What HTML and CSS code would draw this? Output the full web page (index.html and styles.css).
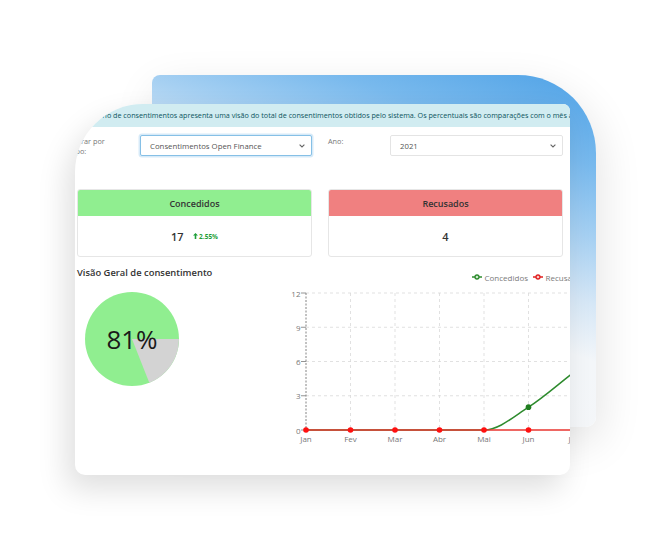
FILE: index.html
```html
<!DOCTYPE html>
<html lang="pt-BR">
<head>
<meta charset="utf-8">
<title>Relatório de consentimentos</title>
<link rel="stylesheet" href="styles.css">
</head>
<body>
<div class="stage">
  <div class="back"></div>
  <div class="front">
    <div class="dash">
      <div class="alert">O relatório de consentimentos apresenta uma visão do total de consentimentos obtidos pelo sistema. Os percentuais são comparações com o mês anterior.</div>
      <div class="filters">
        <div class="flabel">Filtrar por<br>tipo:</div>
        <div class="select select-focus">
          <span>Consentimentos Open Finance</span>
          <svg class="chev" width="6" height="4" viewBox="0 0 6 4"><polyline points="0.6,0.6 3,3 5.4,0.6" fill="none" stroke="#666" stroke-width="1.1"/></svg>
        </div>
        <div class="flabel flabel-ano">Ano:</div>
        <div class="select select-year">
          <span>2021</span>
          <svg class="chev" width="6" height="4" viewBox="0 0 6 4"><polyline points="0.6,0.6 3,3 5.4,0.6" fill="none" stroke="#666" stroke-width="1.1"/></svg>
        </div>
      </div>
      <div class="cards">
        <div class="kpi">
          <div class="kpi-head kpi-green">Concedidos</div>
          <div class="kpi-body">
            <span class="kpi-num">17</span>
            <span class="delta"><svg width="5" height="6" viewBox="0 0 5 6"><path d="M2.5 0 L5 2.6 L3.3 2.6 L3.3 6 L1.7 6 L1.7 2.6 L0 2.6 Z" fill="#1e9e3a"/></svg>2.55%</span>
          </div>
        </div>
        <div class="kpi">
          <div class="kpi-head kpi-red">Recusados</div>
          <div class="kpi-body"><span class="kpi-num">4</span></div>
        </div>
      </div>
      <div class="overview">
        <div class="pie-col">
          <h3 class="ov-title">Visão Geral de consentimento</h3>
          <svg class="pie" width="96" height="96" viewBox="0 0 96 96">
            <circle cx="48" cy="48" r="47" fill="#90ee90"/>
            <path d="M48 48 L95 48 A47 47 0 0 1 65.3 91.7 Z" fill="#d3d3d3"/>
            <text x="48" y="48" text-anchor="middle" dominant-baseline="central" class="pie-label">81%</text>
          </svg>
        </div>
        <svg class="chart" width="320" height="190" viewBox="0 0 320 190">
          <g class="legend">
            <line x1="192" y1="14" x2="202" y2="14" stroke="#2e8b2e" stroke-width="1.5"/>
            <circle cx="197" cy="14" r="2" fill="#cfe9cf" stroke="#2e8b2e" stroke-width="1.3"/>
            <text x="204.5" y="14" dominant-baseline="central">Concedidos</text>
            <line x1="253" y1="14" x2="263" y2="14" stroke="#e02020" stroke-width="1.5"/>
            <circle cx="258" cy="14" r="2" fill="#f6c8c8" stroke="#e02020" stroke-width="1.3"/>
            <text x="265.5" y="14" dominant-baseline="central">Recusados</text>
          </g>
          <g class="grid" stroke="#d9d9d9" stroke-width="0.8" stroke-dasharray="3 3">
            <line x1="26" y1="30" x2="320" y2="30"/>
            <line x1="26" y1="64.25" x2="320" y2="64.25"/>
            <line x1="26" y1="98.5" x2="320" y2="98.5"/>
            <line x1="26" y1="132.75" x2="320" y2="132.75"/>
            <line x1="70.5" y1="30" x2="70.5" y2="167"/>
            <line x1="115" y1="30" x2="115" y2="167"/>
            <line x1="159.5" y1="30" x2="159.5" y2="167"/>
            <line x1="204" y1="30" x2="204" y2="167"/>
            <line x1="248.5" y1="30" x2="248.5" y2="167"/>
            <line x1="293" y1="30" x2="293" y2="167"/>
          </g>
          <line x1="26" y1="30" x2="26" y2="167" stroke="#777" stroke-width="0.9" stroke-dasharray="2 1.5"/>
          <g stroke="#888" stroke-width="0.9">
            <line x1="21" y1="30" x2="26" y2="30"/>
            <line x1="21" y1="64.25" x2="26" y2="64.25"/>
            <line x1="21" y1="98.5" x2="26" y2="98.5"/>
            <line x1="21" y1="132.75" x2="26" y2="132.75"/>
            <line x1="21" y1="167" x2="26" y2="167"/>
          </g>
          <g class="ylab" text-anchor="end">
            <text x="20.5" y="30" dominant-baseline="central">12</text>
            <text x="20.5" y="64.25" dominant-baseline="central">9</text>
            <text x="20.5" y="98.5" dominant-baseline="central">6</text>
            <text x="20.5" y="132.75" dominant-baseline="central">3</text>
            <text x="20.5" y="167" dominant-baseline="central">0</text>
          </g>
          <g class="xlab" text-anchor="middle">
            <text x="26" y="175.5" dominant-baseline="central">Jan</text>
            <text x="70.5" y="175.5" dominant-baseline="central">Fev</text>
            <text x="115" y="175.5" dominant-baseline="central">Mar</text>
            <text x="159.5" y="175.5" dominant-baseline="central">Abr</text>
            <text x="204" y="175.5" dominant-baseline="central">Mai</text>
            <text x="248.5" y="175.5" dominant-baseline="central">Jun</text>
            <text x="293" y="175.5" dominant-baseline="central">Jul</text>
          </g>
          <path d="M26 167 L204 167 C218.83 167 233.67 153.68 248.5 144.17 C263.33 134.65 278.17 121.3 293 109.9" fill="none" stroke="#2e8b2e" stroke-width="1.5"/>
          <circle cx="248.5" cy="144.17" r="2.8" fill="#1f7d1f"/>
          <line x1="26" y1="167" x2="320" y2="167" stroke="#e8342f" stroke-width="1.6"/>
          <g fill="#ff1010">
            <circle cx="26" cy="167" r="2.8"/>
            <circle cx="70.5" cy="167" r="2.8"/>
            <circle cx="115" cy="167" r="2.8"/>
            <circle cx="159.5" cy="167" r="2.8"/>
            <circle cx="204" cy="167" r="2.8"/>
            <circle cx="248.5" cy="167" r="2.8"/>
            <circle cx="293" cy="167" r="2.8"/>
          </g>
        </svg>
      </div>
    </div>
  </div>
</div>
</body>
</html>
```

FILE: styles.css
```css
html, body {
  margin: 0;
  padding: 0;
  background: #ffffff;
}

body {
  width: 672px;
  height: 550px;
  overflow: hidden;
  font-family: "Open Sans", "Noto Sans", sans-serif;
  color: #333;
}

.stage {
  display: grid;
  width: 672px;
  height: 550px;
}

.back,
.front {
  grid-area: 1 / 1;
  align-self: start;
  justify-self: start;
}

.back {
  margin: 75px 0 0 152px;
  width: 444px;
  height: 352px;
  border-radius: 8px 78px 10px 8px;
  background: linear-gradient(200deg, #4fa2e6 0%, #78b9ed 18%, #a6d0f2 32%, #d6e7f6 45%, #f3f6f9 56%, #f6f6f7 100%);
  box-shadow: 4px 14px 44px rgba(0, 0, 0, 0.11);
}

.front {
  margin: 104px 0 0 75px;
  width: 495px;
  height: 371px;
  border-radius: 68px 7px 10px 10px;
  background: #ffffff;
  overflow: hidden;
  box-shadow: -8px 14px 30px rgba(0, 0, 0, 0.13);
}

.dash {
  margin-left: -9px;
  width: 640px;
}

.alert {
  height: 23px;
  background: #d1ecf1;
  color: #0c5460;
  font-size: 7.2px;
  line-height: 23px;
  padding-left: 9px;
  white-space: nowrap;
}

.filters {
  display: flex;
  align-items: flex-start;
  margin-top: 8px;
  padding-left: 5px;
}

.flabel {
  width: 69px;
  font-size: 7.3px;
  line-height: 10px;
  padding-top: 1px;
  color: #777;
}

.flabel-ano {
  width: 62px;
  margin-left: 16px;
}

.select {
  box-sizing: border-box;
  height: 21px;
  display: flex;
  align-items: center;
  justify-content: space-between;
  padding: 0 6px 0 9px;
  border-radius: 2px;
  font-size: 7.8px;
  color: #555;
  background: #fff;
}

.select-focus {
  width: 172px;
  border: 1px solid #86c0e6;
  box-shadow: 0 0 0 1.5px rgba(140, 196, 236, 0.35);
}

.select-year {
  width: 173px;
  border: 1px solid #e4e4e4;
}

.chev {
  display: block;
}

.cards {
  display: flex;
  gap: 16px;
  margin-top: 33px;
  padding-left: 11px;
}

.kpi {
  box-sizing: border-box;
  width: 235px;
  border: 1px solid #e6e6e6;
  border-radius: 3px;
  overflow: hidden;
}

.kpi-head {
  height: 26px;
  display: flex;
  align-items: center;
  justify-content: center;
  font-size: 9px;
  font-weight: 600;
  color: #333;
}

.kpi-green {
  background: #90ee90;
}

.kpi-red {
  background: #f08080;
}

.kpi-body {
  height: 40px;
  display: flex;
  align-items: center;
  justify-content: center;
  gap: 9px;
}

.kpi-num {
  font-size: 11px;
  font-weight: 600;
  color: #333;
}

.delta {
  display: flex;
  align-items: center;
  gap: 1.5px;
  font-size: 6.5px;
  font-weight: 700;
  color: #1e9e3a;
}

.delta svg {
  display: block;
}

.overview {
  display: flex;
  align-items: flex-start;
  margin-top: 6px;
  padding-left: 11px;
}

.pie-col {
  width: 203px;
  flex: none;
  padding-top: 4px;
}

.ov-title {
  margin: 0;
  font-size: 9.4px;
  line-height: 12px;
  font-weight: 600;
  color: #333;
  white-space: nowrap;
}

.pie {
  display: block;
  margin: 12px 0 0 7px;
}

.pie-label {
  font-family: "Open Sans", "Noto Sans", sans-serif;
  font-size: 26px;
  fill: #1a1a1a;
}

.chart {
  display: block;
  flex: none;
  overflow: visible;
}

.legend text {
  font-family: "Open Sans", "Noto Sans", sans-serif;
  font-size: 8px;
  fill: #7a7a7a;
}

.ylab text,
.xlab text {
  font-family: "Open Sans", "Noto Sans", sans-serif;
  font-size: 8px;
  fill: #777;
}
```
